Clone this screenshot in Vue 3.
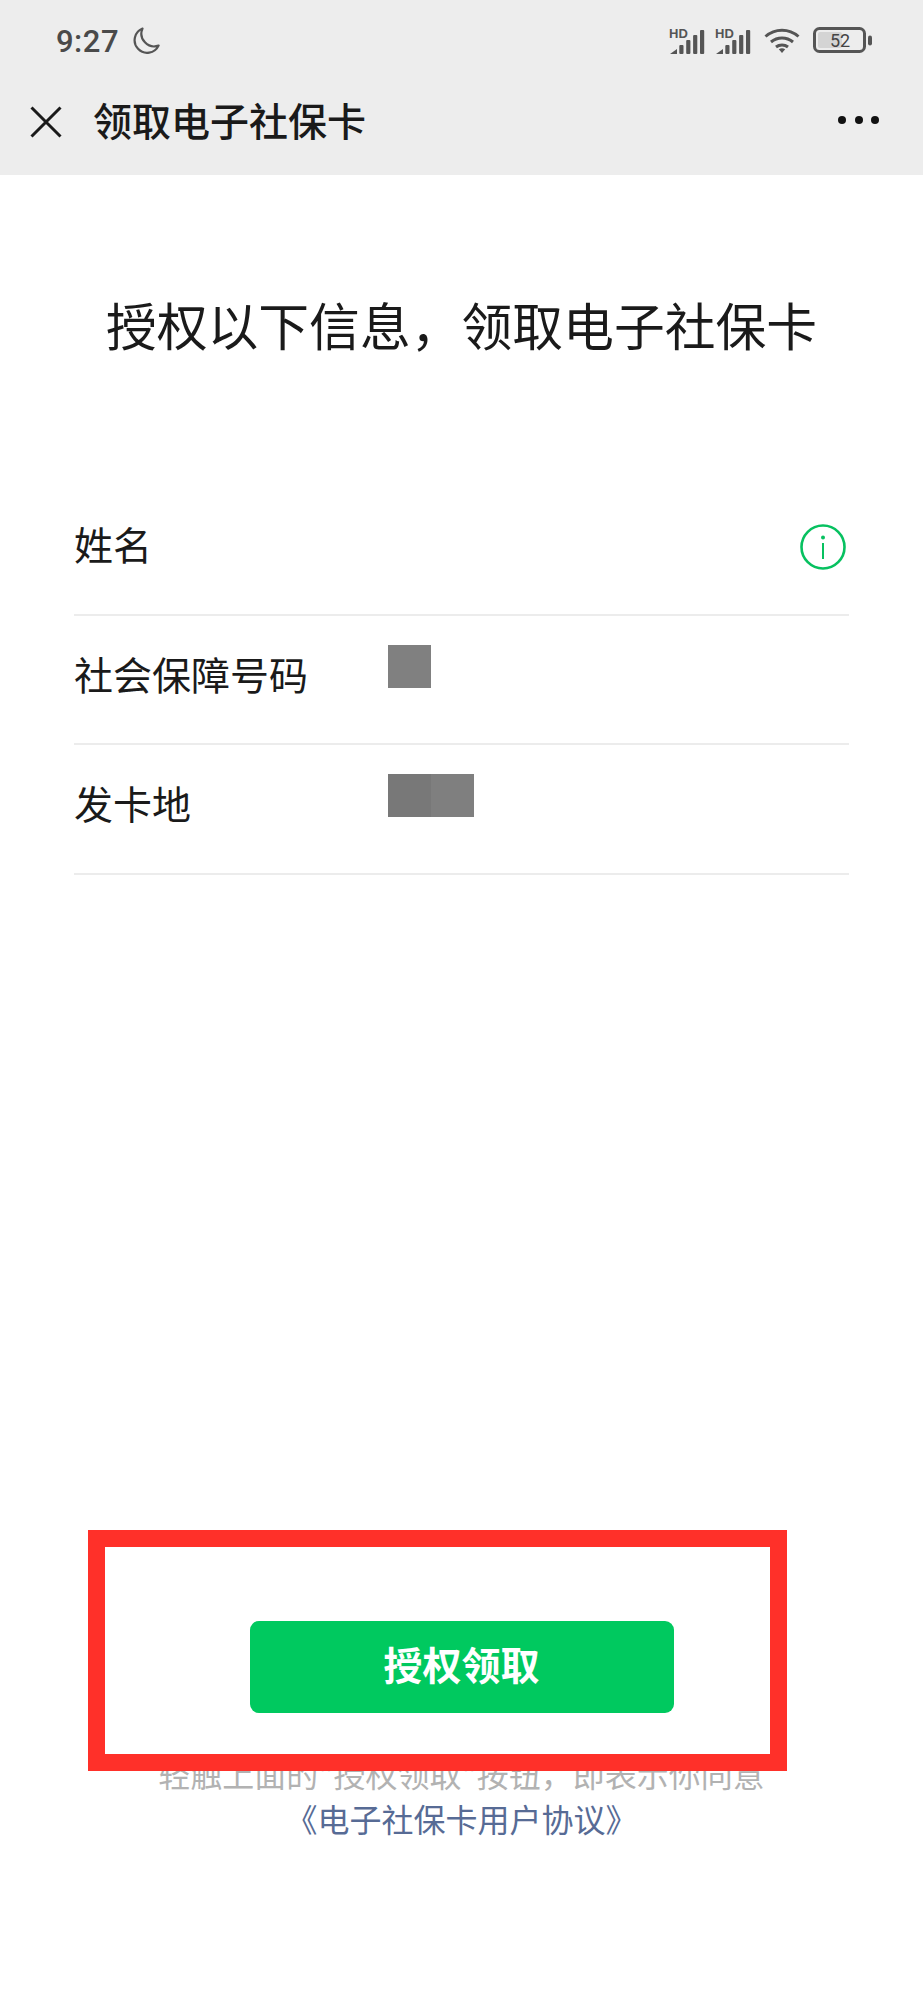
<script setup>
const rows = [
  { label: "姓名", masks: [], info: true },
  { label: "社会保障号码", masks: ["#808080"] },
  { label: "发卡地", masks: ["#787878", "#7f7f7f"] },
];
const bars = [0, 1, 2, 3];
</script>

<template>
  <div class="page">
    <header class="top">
      <div class="status">
        <span class="time">9:27</span>
        <svg class="moon" viewBox="0 0 28 28" width="28" height="28">
          <path d="M10.5 1.5A12.6 12.6 0 1 0 26.6 18.6A12.8 12.8 0 0 1 10.5 1.5Z" fill="none" stroke="#555" stroke-width="2.2" stroke-linejoin="round" />
        </svg>
        <div class="status-right">
          <svg v-for="n in 2" :key="n" class="signal" viewBox="0 -2 36 28" width="36" height="28">
            <text x="0" y="9.5" class="hd">HD</text>
            <path d="M1 26 L8 21 V26 Z" fill="#555" />
            <rect v-for="b in bars" :key="b" :x="10.3 + b * 6.9" :y="17 - b * 5" width="4.2" :height="9 + b * 5" rx="1" fill="#555" />
          </svg>
          <svg class="wifi" viewBox="0 0 36 26" width="36" height="26">
            <path d="M1.5 9.5C11 1 25 1 34.5 9.5M7 15C13.5 9.5 22.5 9.5 29 15M12 20C15.5 17.2 20.5 17.2 24 20" fill="none" stroke="#555" stroke-width="3" />
            <path d="M14.8 22.2C16.8 20.8 19.2 20.8 21.2 22.2L18 26Z" fill="#555" />
          </svg>
          <svg class="battery" viewBox="0 0 59 26" width="59" height="26">
            <rect x="1.5" y="1.5" width="50" height="23" rx="5" fill="none" stroke="#555" stroke-width="3" />
            <rect x="5" y="5" width="24" height="16" rx="2" fill="#d4d4d4" />
            <rect x="55" y="8.5" width="4" height="10" rx="2" fill="#555" />
            <text x="27" y="20" class="level">52</text>
          </svg>
        </div>
      </div>
      <nav class="bar">
        <svg class="close" viewBox="0 0 32 32" width="32" height="32">
          <path d="M1.5 1.5L30.5 30.5M30.5 1.5L1.5 30.5" stroke="#1a1a1a" stroke-width="3" fill="none" />
        </svg>
        <h2 class="bar-title">领取电子社保卡</h2>
        <div class="more"><i></i><i></i><i></i></div>
      </nav>
    </header>

    <h1 class="heading">授权以下信息，领取电子社保卡</h1>

    <ul class="list">
      <li v-for="row in rows" :key="row.label" class="row">
        <span class="label">{{ row.label }}</span>
        <span v-for="(c, i) in row.masks" :key="i" class="mask" :style="{ background: c }"></span>
        <svg v-if="row.info" class="info" viewBox="0 0 46 46" width="46" height="46">
          <circle cx="23" cy="23" r="21.5" fill="none" stroke="#07c160" stroke-width="2.6" />
          <circle cx="23" cy="13.5" r="2" fill="#07c160" />
          <rect x="22" y="19" width="2" height="16" fill="#07c160" />
        </svg>
      </li>
    </ul>

    <footer class="foot">
      <button class="grant">授权领取</button>
      <p class="hint">轻触上面的"授权领取"按钮，即表示你同意</p>
      <a class="link">《电子社保卡用户协议》</a>
    </footer>

    <div class="callout"></div>
  </div>
</template>

<style>
body {
  background: #fff;
}
</style>

<style scoped>
.page {
  position: relative;
  display: flex;
  flex-direction: column;
  width: 923px;
  height: 2000px;
  overflow: hidden;
  background: #fff;
  font-family: "Noto Sans CJK SC", "Noto Sans", sans-serif;
  color: #1a1a1a;
}

/* 顶部状态栏和导航 */
.top {
  height: 175px;
  background: #ededed;
}

.status {
  display: flex;
  align-items: center;
  height: 82px;
  padding: 0 51px 0 56px;
}

.time {
  font-family: Roboto, sans-serif;
  font-size: 31px;
  font-weight: 500;
  letter-spacing: 0.5px;
  color: #4a4a4a;
}

.moon {
  margin-left: 13px;
}

.status-right {
  display: flex;
  align-items: center;
  margin: 0 0 3px auto;
}

.signal + .signal {
  margin-left: 10px;
}

.wifi {
  margin-left: 13px;
}

.battery {
  margin-left: 13px;
}

.hd {
  font-family: "Liberation Sans", sans-serif;
  font-size: 13px;
  font-weight: 700;
  fill: #555;
}

.level {
  font-family: Roboto, sans-serif;
  font-size: 18px;
  text-anchor: middle;
  fill: #444;
}

.bar {
  display: flex;
  align-items: center;
  height: 79px;
  padding: 0 44px 0 30px;
}

.bar-title {
  margin: 0 0 5px 31px;
  font-size: 39px;
  font-weight: 500;
  line-height: 50px;
}

.more {
  display: flex;
  gap: 8.5px;
  margin: 0 0 3px auto;
}

.more i {
  width: 8px;
  height: 8px;
  border-radius: 50%;
  background: #111;
}

/* 标题 */
.heading {
  margin: 114px 0 0;
  font-size: 50.8px;
  font-weight: 400;
  line-height: 70px;
  text-align: center;
}

/* 信息列表 */
.list {
  margin: 127px 74px 0;
  padding: 0;
  list-style: none;
}

.row {
  display: flex;
  height: 129.5px;
  box-sizing: border-box;
  border-bottom: 2px solid #ececec;
}

.label {
  width: 314px;
  font-size: 39px;
  line-height: 114px;
}

.mask {
  width: 43px;
  height: 43px;
  margin-top: 29px;
}

.info {
  margin: 38px 3px 0 auto;
}

/* 底部按钮 */
.foot {
  display: flex;
  flex-direction: column;
  align-items: center;
  margin-top: auto;
  padding-bottom: 160px;
}

.grant {
  width: 424px;
  height: 92px;
  padding: 0 0 8px;
  border: none;
  border-radius: 9px;
  background: #00c95f;
  color: #fff;
  font-family: inherit;
  font-size: 39px;
  font-weight: 700;
}

.hint {
  margin: 39px 0 0;
  font-size: 32px;
  line-height: 43px;
  color: #b2b2b2;
}

.link {
  margin-top: 2px;
  font-size: 32px;
  line-height: 43px;
  color: #576b95;
}

/* 红色标注框 */
.callout {
  position: absolute;
  left: 88px;
  top: 1530px;
  width: 699px;
  height: 241px;
  box-sizing: border-box;
  border: solid #ff3029;
  border-width: 17px;
}
</style>
